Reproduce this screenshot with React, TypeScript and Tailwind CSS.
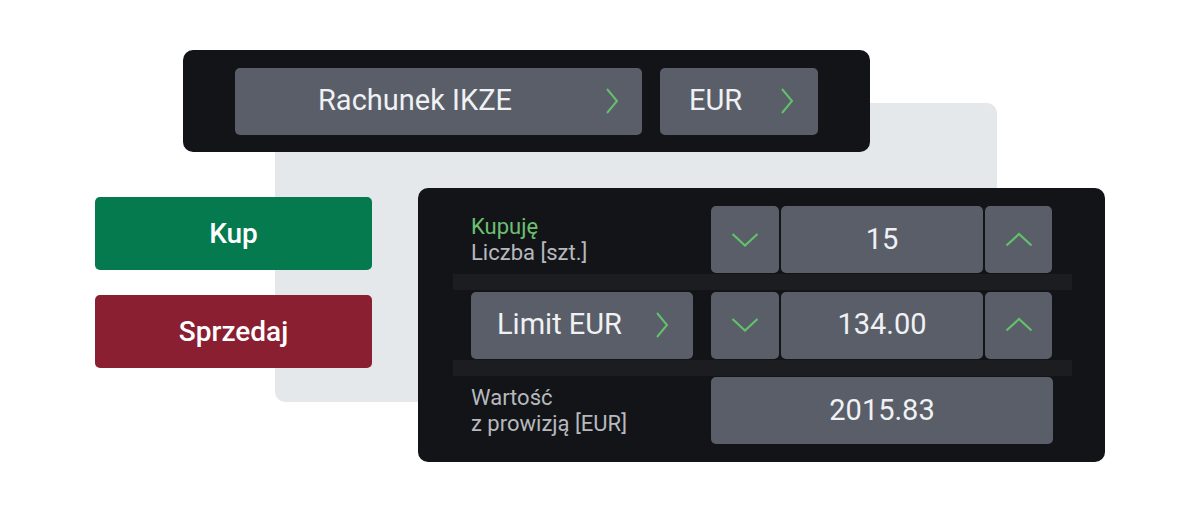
import React from 'react';

const Chevron = ({ dir, className = '' }: { dir: 'right' | 'up' | 'down'; className?: string }) => {
  if (dir === 'right') {
    return (
      <svg width="14" height="28" viewBox="0 0 14 28" className={className}>
        <path d="M2 2 L12 14 L2 26" fill="none" stroke="#63c06b" strokeWidth="2" />
      </svg>
    );
  }
  const d = dir === 'down' ? 'M1.5 2 L14 13.5 L26.5 2' : 'M1.5 13.5 L14 2 L26.5 13.5';
  return (
    <svg width="28" height="16" viewBox="0 0 28 16" className={className}>
      <path d={d} fill="none" stroke="#63c06b" strokeWidth="2.2" />
    </svg>
  );
};

const Stepper = ({ value }: { value: string }) => (
  <div className="flex h-[67px] gap-[2px]">
    <div className="flex w-[68px] items-center justify-center rounded-[5px] bg-[#595e69]">
      <Chevron dir="down" />
    </div>
    <div className="flex w-[202px] items-center justify-center rounded-[5px] bg-[#595e69] text-[29px] text-[#f0f1f3]">
      {value}
    </div>
    <div className="flex w-[67px] items-center justify-center rounded-[5px] bg-[#595e69]">
      <Chevron dir="up" />
    </div>
  </div>
);

const Stripe = () => (
  <div className="flex h-[19px] items-center">
    <div className="ml-[35px] mr-[33px] h-[16px] flex-1 bg-[#1c1d21]" />
  </div>
);

export default function App() {
  return (
    <div
      className="relative h-[514px] w-[1200px] overflow-hidden bg-white"
      style={{ fontFamily: 'Roboto, "Noto Sans", sans-serif' }}
    >
      {/* light backdrop card behind everything */}
      <div className="absolute left-[275px] top-[103px] h-[299px] w-[722px] rounded-[10px] bg-[#e4e8eb]" />

      <div className="relative pt-[50px]">
        {/* account / currency bar */}
        <div className="ml-[183px] flex h-[102px] w-[687px] items-center gap-[18px] rounded-[10px] bg-[#131418] pl-[52px]">
          <div className="flex h-[67px] w-[407px] items-center rounded-[5px] bg-[#595e69] pl-[83px] text-[29px] text-[#f0f1f3]">
            <span>Rachunek IKZE</span>
            <Chevron dir="right" className="ml-auto mr-[23px]" />
          </div>
          <div className="flex h-[67px] w-[158px] items-center rounded-[5px] bg-[#595e69] pl-[29px] text-[29px] text-[#f0f1f3]">
            <span>EUR</span>
            <Chevron dir="right" className="ml-auto mr-[24px]" />
          </div>
        </div>

        <div className="mt-[36px] flex pl-[95px]">
          <div className="flex w-[277px] flex-col gap-[25px] pt-[9px]">
            <button className="h-[73px] rounded-[5px] bg-[#047a4e] text-[28px] font-medium text-white">Kup</button>
            <button className="h-[73px] rounded-[5px] bg-[#891f31] text-[28px] font-medium text-white">Sprzedaj</button>
          </div>

          {/* order panel */}
          <div className="ml-[46px] flex h-[274px] w-[687px] flex-col rounded-[10px] bg-[#131418] py-[18px]">
            <div className="flex items-center">
              <div className="w-[293px] pl-[53px] text-[22px] leading-[26px]">
                <div className="text-[#6cc072]">Kupuję</div>
                <div className="text-[#b6b9be]">Liczba [szt.]</div>
              </div>
              <Stepper value="15" />
            </div>
            <Stripe />
            <div className="flex items-center">
              <div className="ml-[53px] mr-[18px] flex h-[67px] w-[222px] items-center rounded-[5px] bg-[#595e69] pl-[26px] text-[29px] text-[#f0f1f3]">
                <span>Limit EUR</span>
                <Chevron dir="right" className="ml-auto mr-[24px]" />
              </div>
              <Stepper value="134.00" />
            </div>
            <Stripe />
            <div className="flex items-center">
              <div className="w-[293px] pl-[53px] text-[22px] leading-[26px] text-[#b6b9be]">
                <div>Wartość</div>
                <div>z prowizją [EUR]</div>
              </div>
              <div className="flex h-[67px] w-[342px] items-center justify-center rounded-[5px] bg-[#595e69] text-[29px] text-[#f0f1f3]">
                2015.83
              </div>
            </div>
          </div>
        </div>
      </div>
    </div>
  );
}
